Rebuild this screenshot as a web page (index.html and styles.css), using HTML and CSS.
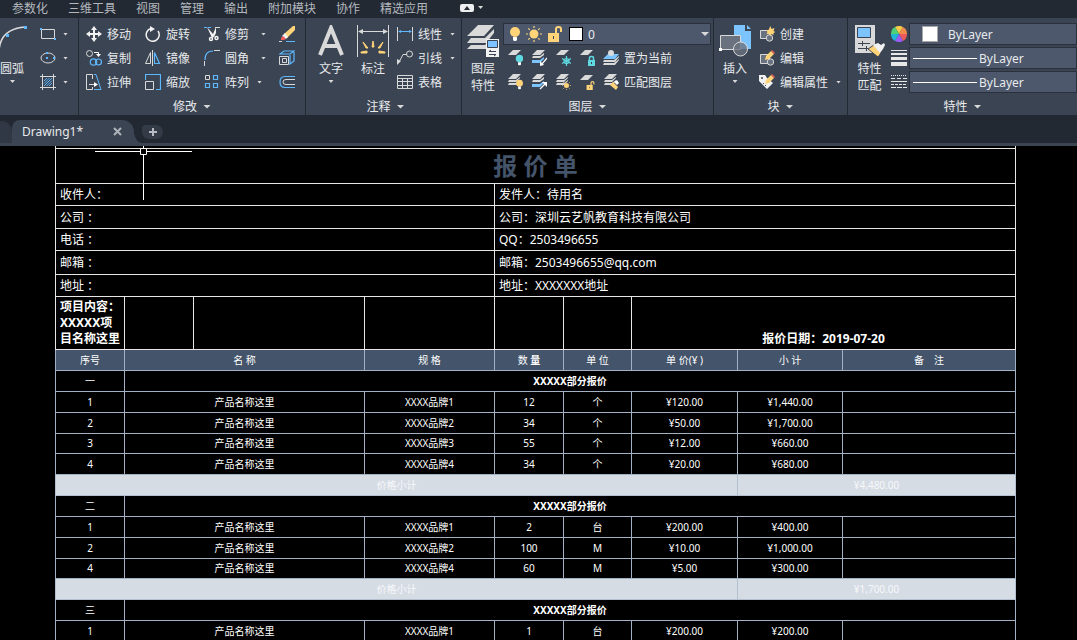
FILE: index.html
```html
<!DOCTYPE html>
<html lang="zh-CN">
<head>
    <meta charset="UTF-8">
    <meta name="viewport" content="width=device-width, initial-scale=1.0">
    <title>Drawing1*</title>
    <link rel="stylesheet" href="styles.css">
</head>
<body>

    <!-- Shared shapes -->
    <svg class="defs" aria-hidden="true">
        <symbol id="bulb" viewBox="0 0 12 16"><circle cx="6" cy="6" r="5"/><path fill="#fff" d="M4 11h4v3l-1 1H5l-1-1z"/></symbol>
        <symbol id="sun" viewBox="0 0 16 16"><circle cx="8" cy="8" r="4.5"/><path stroke="#ffd479" stroke-width="1.2" d="M8 0v2M8 14v2M0 8h2M14 8h2M2.3 2.3l1.5 1.5M12.2 12.2l1.5 1.5M2.3 13.7l1.5-1.5M12.2 3.8l1.5-1.5"/></symbol>
        <symbol id="unlock" viewBox="0 0 16 16"><path d="M1 7h11v9H1z"/><path fill="none" stroke="#ffd479" stroke-width="2" d="M9 7V3q0-2 2.500-2T14 3v3"/><path fill="#3b4453" d="M6 10h1v3H6z"/></symbol>
        <symbol id="layers" viewBox="0 0 16 16"><path fill="#d9d9d9" d="M6 0h8L9 5H1zM2 6h7l4-3v1L9 8H1zM2 9h7l4-3v1l-4 4H1z"/></symbol>
        <symbol id="layersblue" viewBox="0 0 16 16"><path fill="#d9d9d9" d="M6 0h8L9 5H1zM2 6h7l4-3v2L9 8H1z"/><path fill="#7cc4ff" d="M1 10h8l4-3v2l-4 4H1z"/></symbol>
        <symbol id="pencil" viewBox="0 0 10 10"><path fill="#ffd479" d="M1 6l5-5 3 3-5 5-4 1z"/><path fill="#f25c5c" d="M7 0l3 3-1 1-3-3z"/></symbol>
    </svg>

    <nav class="menubar">
        <a href="#">参数化</a>
        <a href="#">三维工具</a>
        <a href="#">视图</a>
        <a href="#">管理</a>
        <a href="#">输出</a>
        <a href="#">附加模块</a>
        <a href="#">协作</a>
        <a href="#">精选应用</a>
        <button class="minimize" aria-label="最小化">
            <svg width="14" height="8"><rect width="14" height="8" rx="2" fill="#eceef0"/><path fill="#222933" d="M4 6h6L7 2z"/></svg>
            <i class="caret"></i>
        </button>
    </nav>

    <div class="ribbon">
        <!-- Draw -->
        <section class="panel draw">
            <div class="tools">
                <button class="big arc">
                    <svg width="32" height="32" viewBox="0 0 32 32"><path fill="none" stroke="#d9d9d9" stroke-width="1.500" d="M3 28Q3 4 29 2"/><path fill="#5eb8ff" d="M1 26h3v3H1zM10 9h3v3h-3zM28 1h3v3h-3z"/></svg>
                    <span>圆弧</span>
                    <i class="caret"></i>
                </button>
                <div class="stack">
                    <button class="tool" aria-label="矩形"><svg width="16" height="16"><path fill="none" stroke="#d9d9d9" d="M1.500 3.500h13v9h-13z"/><path fill="#5eb8ff" d="M0 2h2v2H0zM14 12h2v2h-2z"/></svg><i class="caret"></i></button>
                    <button class="tool" aria-label="椭圆"><svg width="16" height="16"><ellipse cx="8" cy="8" rx="7" ry="5" fill="none" stroke="#d9d9d9"/><path fill="#5eb8ff" d="M6 2h2v2H6zM6 7h2v2H6zM13 7h2v2h-2z"/></svg><i class="caret"></i></button>
                    <button class="tool" aria-label="图案填充"><svg width="16" height="16"><path fill="none" stroke="#d9d9d9" d="M0 2.500h16M0 13.500h16M2.500 0v16M13.500 0v16"/><path stroke="#5eb8ff" d="M4 7l3-3M4 12l8-8M4 9.500L9.500 4M6.500 12L12 6.500M9 12l3-3"/></svg><i class="caret"></i></button>
                </div>
            </div>
        </section>

        <!-- Modify -->
        <section class="panel modify">
            <div class="tools">
                <button class="tool"><svg width="16" height="16"><path stroke="#f2f2f2" stroke-width="2" d="M8 2v12M2 8h12"/><path fill="#f2f2f2" d="M8 0l3 4H5zM8 16l3-4H5zM0 8l4-3v6zM16 8l-4-3v6z"/></svg>移动</button>
                <button class="tool"><svg width="16" height="16"><path fill="none" stroke="#f2f2f2" stroke-width="1.500" d="M6 2.500A6.500 6.500 0 1 0 13 5"/><path fill="#f2f2f2" d="M5 0l5 3-5 3z"/></svg>旋转</button>
                <button class="tool"><svg width="16" height="16"><path stroke="#5eb8ff" stroke-dasharray="3 1" d="M0 1.500h8"/><path stroke="#d9d9d9" d="M11 1.500h5"/><path fill="#f2f2f2" d="M3 1l6 7 3-7v6l-2 4-2 1z"/><circle cx="7" cy="13" r="1.500" fill="none" stroke="#f2f2f2" stroke-width="1.500"/><circle cx="12.500" cy="12" r="1.500" fill="none" stroke="#f2f2f2" stroke-width="1.500"/></svg>修剪<i class="caret"></i></button>
                <button class="tool" aria-label="删除"><svg width="16" height="16"><path fill="#ffd479" d="M14 0h2v4l-8 8-3-4z"/><path fill="#f2f2f2" d="M6 7l3 4-2 2-4-3z"/><path fill="#f25c5c" d="M4 10l3 3-2 1H2v-2z"/><path stroke="#d9d9d9" d="M0 15.500h3"/><path stroke="#5eb8ff" d="M7 15.500h9"/></svg></button>

                <button class="tool"><svg width="16" height="16"><circle cx="3.500" cy="3.500" r="3" fill="none" stroke="#d9d9d9"/><path fill="none" stroke="#fff" d="M8 2.500h4.500V6"/><path fill="#fff" d="M10 4h5l-2.500 3z"/><circle cx="7.500" cy="12" r="3.200" fill="none" stroke="#5eb8ff" stroke-width="1.200"/><circle cx="12.500" cy="12" r="3" fill="none" stroke="#5eb8ff" stroke-width="1.200"/></svg>复制</button>
                <button class="tool"><svg width="16" height="16"><path fill="none" stroke="#d9d9d9" d="M5.500 2.500v11h-5z"/><path fill="none" stroke="#5eb8ff" stroke-width="1.200" d="M9.500 2.500v11h5z"/><path stroke="#d9d9d9" d="M7.500 0v16"/></svg>镜像</button>
                <button class="tool"><svg width="16" height="16"><path stroke="#d9d9d9" d="M10 .5h6M.5 11v5"/><path fill="none" stroke="#5eb8ff" stroke-width="1.200" d="M1 10Q1 1 9 1"/></svg>圆角<i class="caret"></i></button>
                <button class="tool" aria-label="分解"><svg width="16" height="16"><path fill="none" stroke="#d9d9d9" d="M.5 6.500h9v8h-9zM3.500 8.500h4v4h-4z"/><path fill="none" stroke="#5eb8ff" stroke-width="1.200" d="M1 4l4-3h10l-4 3zM15 2v9l-4 3V5"/></svg></button>

                <button class="tool"><svg width="16" height="16"><path fill="none" stroke="#d9d9d9" d="M6.500 5V.5h-6v15h6V13M3 10.500h7"/><path fill="#fff" d="M8 8l4 2.500L8 13z"/><path fill="none" stroke="#5eb8ff" d="M8 .5h2l5 15H8"/></svg>拉伸</button>
                <button class="tool"><svg width="16" height="16"><path fill="none" stroke="#5eb8ff" stroke-width="1.200" d="M.5 6V.5h15v15H11"/><path fill="none" stroke="#d9d9d9" d="M.5 7.500h8v8h-8z"/></svg>缩放</button>
                <button class="tool near"><svg width="16" height="16"><path fill="none" stroke="#d9d9d9" d="M1.500 1.500h4v4h-4z"/><path fill="none" stroke="#5eb8ff" stroke-width="1.200" d="M9.500 1.500h4v4h-4zM1.500 9.500h4v4h-4zM9.500 9.500h4v4h-4z"/></svg>阵列<i class="caret"></i></button>
                <button class="tool" aria-label="偏移"><svg width="16" height="16"><path fill="none" stroke="#5eb8ff" stroke-width="1.200" d="M16 2.500H6Q1 2.500 1 8t5 5.500h10"/><path fill="none" stroke="#d9d9d9" d="M16 5.500H7Q4 5.500 4 8t3 2.500h9"/></svg></button>
            </div>
            <button class="title">修改<i class="caret wide"></i></button>
        </section>

        <!-- Annotate -->
        <section class="panel annotate">
            <div class="tools">
                <button class="big">
                    <svg width="32" height="32"><path fill="none" stroke="#d9d9d9" stroke-width="4" d="M5 30L16 3l11 27M9 21h14"/></svg>
                    <span>文字</span>
                    <i class="caret"></i>
                </button>
                <button class="big">
                    <svg width="32" height="32"><path stroke="#d9d9d9" d="M.5 0v32M31.500 0v32M2 6.500h28"/><path fill="#d9d9d9" d="M1 6.500L6 4v5zM31 6.500L26 4v5z"/><path fill="#ffd479" d="M15 22l1-6 1 6zM11 23l-5-6 3 6zM21 23l5-6-3 6zM10 26l-6 1v1h6zM22 26l6 1v1h-6z" stroke="#ffd479"/></svg>
                    <span>标注</span>
                </button>
                <div class="stack">
                    <button class="tool near"><svg width="16" height="16"><path stroke="#d9d9d9" d="M.5 1v14M15.500 1v14"/><path stroke="#5eb8ff" d="M2 5.500h12"/><path fill="#5eb8ff" d="M1 5.500L4 4v3zM15 5.500L12 4v3z"/></svg>线性<i class="caret"></i></button>
                    <button class="tool near"><svg width="16" height="16"><circle cx="12.500" cy="4" r="3" fill="none" stroke="#d9d9d9"/><path fill="none" stroke="#d9d9d9" d="M10 4.500H6L2 12"/><path fill="#d9d9d9" d="M0 15V9l4 2z"/></svg>引线<i class="caret"></i></button>
                    <button class="tool"><svg width="16" height="16"><path fill="none" stroke="#d9d9d9" d="M.5 1.500h15v13H.5zM0 4.500h16M0 7.500h16M0 11.500h16M5.500 4v10M10.500 4v10"/></svg>表格</button>
                </div>
            </div>
            <button class="title">注释<i class="caret wide"></i></button>
        </section>

        <!-- Layers -->
        <section class="panel layer">
            <div class="tools">
                <button class="big">
                    <svg width="32" height="32"><path fill="#d9d9d9" d="M11 0h16L17 11H0zM4 13h14L27 4v4l-8 10H0zM4 20h14l2-2v6H0z"/><path fill="#f2f2f2" d="M19 14h13v18H19z"/><path fill="#7cc4ff" stroke="#3b4453" d="M20.500 15.500h10v7h-10z"/><path fill="none" stroke="#3b4453" d="M22 26.500h7M22 29.500h7M24 25l-2 1.500M27 31l2-1.500"/></svg>
                    <span>图层<br>特性</span>
                </button>
                <div class="stack">
                    <div class="combo layer-combo">
                        <svg width="12" height="16" fill="#ffd479"><use href="#bulb"/></svg>
                        <svg width="16" height="16" fill="#ffd479"><use href="#sun"/></svg>
                        <svg width="16" height="16" fill="#ffd479"><use href="#unlock"/></svg>
                        <i class="swatch black"></i>
                        <select aria-label="图层"><option>0</option></select>
                        <i class="caret wide"></i>
                    </div>
                    <div class="icons">
                        <button class="tool" aria-label="关"><svg width="16" height="16"><path fill="#d9d9d9" d="M6 0h8L9 5H1z"/><use href="#bulb" x="8" y="4" width="9" height="12" fill="#5fd9e0"/></svg></button>
                        <button class="tool" aria-label="隔离"><svg width="16" height="16"><use href="#layersblue"/><path stroke="#fff" stroke-width="1.200" d="M16 8l-5 6"/><path fill="#fff" d="M9 16v-5l4 4z"/></svg></button>
                        <button class="tool" aria-label="冻结"><svg width="16" height="16"><path fill="#d9d9d9" d="M6 0h8L9 5H1z"/><g fill="none" stroke="#5fd9e0" stroke-width="1.200"><circle cx="11.500" cy="11" r="2.500"/><path d="M11.500 6v10M7 8.500l9 5M7 13.500l9-5"/></g></svg></button>
                        <button class="tool" aria-label="锁定"><svg width="16" height="16"><path fill="#d9d9d9" d="M6 0h8L9 5H1z"/><path fill="#5fd9e0" d="M9 10h7v6H9z"/><path fill="none" stroke="#5fd9e0" stroke-width="1.500" d="M10.500 10V8q0-1.500 2-1.500t2 1.500v2"/><path stroke="#3b4453" d="M12.500 12v2"/></svg></button>
                        <button class="tool"><svg width="16" height="16"><path fill="#7cc4ff" d="M5 4h11l-4 5H0z"/><path fill="#d9d9d9" d="M1 10h10l5-4v1l-4 5H0zM1 13h10l5-4v1l-4 5H0z"/><circle cx="8" cy="3" r="3" fill="#d9d9d9"/></svg>置为当前</button>
                    </div>
                    <div class="icons">
                        <button class="tool" aria-label="打开所有图层"><svg width="16" height="16"><use href="#layers"/><use href="#bulb" x="8" y="5" width="9" height="11" fill="#ffd479"/></svg></button>
                        <button class="tool" aria-label="取消隔离"><svg width="16" height="16"><use href="#layersblue"/><path stroke="#fff" stroke-width="1.200" d="M9 15l5-5"/><path fill="#fff" d="M16 8v5l-5-5z"/></svg></button>
                        <button class="tool" aria-label="解冻"><svg width="16" height="16"><use href="#layers"/><use href="#sun" x="7" y="7" width="9" height="9" fill="#ffd479"/></svg></button>
                        <button class="tool" aria-label="解锁"><svg width="16" height="16"><path fill="#d9d9d9" d="M6 1h8L9 6H1z"/><use href="#unlock" x="7" y="7" width="9" height="9" fill="#ffd479"/></svg></button>
                        <button class="tool"><svg width="16" height="16"><use href="#layers"/><path fill="#ffd479" d="M7 11l3-3 5 5-2 3z"/><path fill="#fff" d="M11 8l3-2 2 3-2 2z"/></svg>匹配图层</button>
                    </div>
                </div>
            </div>
            <button class="title">图层<i class="caret wide"></i></button>
        </section>

        <!-- Block -->
        <section class="panel block">
            <div class="tools">
                <button class="big">
                    <svg width="32" height="32"><path fill="#7cc4ff" d="M15 0h11v6h6v18H15z"/><path fill="#7cc4ff" d="M28 0l4 4h-4z"/><path fill="#6a7280" stroke="#d9d9d9" d="M1.500 10.500h20v14h-20z"/><circle cx="21.500" cy="24" r="7" fill="#6a7280" fill-opacity=".8" stroke="#d9d9d9"/><path fill="#fff" d="M0 23h3v3H0z"/></svg>
                    <span>插入</span>
                    <i class="caret"></i>
                </button>
                <div class="stack">
                    <button class="tool"><svg width="16" height="16"><path fill="#6a7280" stroke="#d9d9d9" d="M1.500 4.500h9v8h-9z"/><circle cx="10.500" cy="12" r="3.200" fill="#6a7280" stroke="#d9d9d9"/><path fill="#ffd479" d="M11.500 0l1 3 3-1-1 3 2 1-2 1 0 2-2-1-1 2-1-2-3 0 1-2-1-2 2 0z"/></svg>创建</button>
                    <button class="tool"><svg width="16" height="16"><path fill="#6a7280" stroke="#d9d9d9" d="M1.500 4.500h9v9h-9z"/><circle cx="11.500" cy="12" r="3.200" fill="#6a7280" stroke="#d9d9d9"/><use href="#pencil" x="6" width="10" height="10"/></svg>编辑</button>
                    <button class="tool near"><svg width="16" height="16"><path fill="#f2f2f2" d="M0 1h6l2 3 6 5-6 6-8-8z"/><circle cx="3" cy="4" r="1" fill="#3b4453"/><path stroke="#3b4453" d="M4 9l1 1M6 11l1 1"/><use href="#pencil" x="6" width="10" height="10"/></svg>编辑属性<i class="caret"></i></button>
                </div>
            </div>
            <button class="title">块<i class="caret wide"></i></button>
        </section>

        <!-- Properties -->
        <section class="panel props">
            <div class="tools">
                <button class="big">
                    <svg width="32" height="32"><path fill="#d9d9d9" d="M1 0h20v28H1z"/><path fill="#7cc4ff" stroke="#3b4453" d="M3.500 2.500h13v10h-13z"/><path stroke="#3b4453" d="M4 18.500h12M4 23.500h10M8.500 16v5M12.500 21v5"/><path fill="#ffd479" stroke="#3b4453" d="M14 24l6-4 7 8-3 4z"/><path fill="#f2f2f2" d="M19 20l5-2 3 2 3-2 1 2-2 4-3 4z"/></svg>
                    <span>特性<br>匹配</span>
                </button>
                <div class="stack">
                    <div class="prop-row">
                        <svg width="16" height="16"><path fill="#f7c948" d="M8 8L4 1a8 8 0 0 1 8 0z"/><path fill="#f28b4b" d="M8 8l4-7a8 8 0 0 1 4 7z"/><path fill="#ee5a5a" d="M8 8h8a8 8 0 0 1-4 7z"/><path fill="#9a5cf5" d="M8 8l4 7a8 8 0 0 1-8 0z"/><path fill="#21b5d8" d="M8 8l-4 7a8 8 0 0 1-4-7z"/><path fill="#4fd07b" d="M8 8H0a8 8 0 0 1 4-7z"/></svg>
                        <div class="combo">
                            <i class="swatch"></i>
                            <select aria-label="对象颜色"><option>ByLayer</option></select>
                        </div>
                    </div>
                    <div class="prop-row">
                        <svg width="16" height="16" fill="#e6e6e6"><path d="M0 0h16v1H0zM0 3h16v2H0zM0 7h16v3H0zM0 12h16v4H0z"/></svg>
                        <div class="combo line-combo">
                            <i class="line"></i>
                            <select aria-label="线宽"><option>ByLayer</option></select>
                        </div>
                    </div>
                    <div class="prop-row">
                        <svg width="16" height="16" stroke="#e6e6e6"><path stroke-dasharray="1 1" d="M0 1.500h16"/><path stroke-dasharray="4 2" d="M0 4.500h16"/><path d="M0 7.500h16"/><path stroke-dasharray="3 1" d="M0 10.500h16"/><path stroke-dasharray="5 1" d="M0 13.500h16"/></svg>
                        <div class="combo line-combo">
                            <i class="line"></i>
                            <select aria-label="线型"><option>ByLayer</option></select>
                        </div>
                    </div>
                </div>
            </div>
            <button class="title">特性<i class="caret wide"></i></button>
        </section>
    </div>

    <div class="tabs">
        <div class="tab-prev"></div>
        <div class="tab">
            <span>Drawing1*</span>
            <button aria-label="关闭"><svg width="9" height="9"><path stroke="#aeb3ba" stroke-width="2" d="M1 1l7 7M8 1L1 8"/></svg></button>
        </div>
        <button class="tab-new" aria-label="新图形"><svg width="8" height="8"><path stroke="#b8bcc2" stroke-width="2" d="M4 0v8M0 4h8"/></svg></button>
    </div>

    <main class="canvas">
        <table class="quote">
            <colgroup>
                <col class="c-no"><col class="c-no"><col class="c-name"><col class="c-spec"><col class="c-no"><col class="c-unit"><col class="c-price"><col class="c-total"><col>
            </colgroup>
            <tbody class="info">
                <tr class="edge"><td colspan="9"></td></tr>
                <tr class="heading"><th colspan="9">报 价 单</th></tr>
                <tr><td colspan="4">收件人：</td><td colspan="5">发件人：待用名</td></tr>
                <tr class="tall"><td colspan="4">公司 ：</td><td colspan="5">公司：深圳云艺帆教育科技有限公司</td></tr>
                <tr><td colspan="4">电话 ：</td><td colspan="5">QQ：2503496655</td></tr>
                <tr class="taller"><td colspan="4">邮箱 ：</td><td colspan="5">邮箱：2503496655@qq.com</td></tr>
                <tr><td colspan="4">地址 ：</td><td colspan="5">地址：XXXXXXX地址</td></tr>
                <tr class="project">
                    <th>项目内容：<br>XXXXX项<br>目名称这里</th><td></td><td></td><td></td><td></td><td></td>
                    <th colspan="3" class="date">报价日期：2019-07-20</th>
                </tr>
            </tbody>
            <tbody class="items">
                <tr class="cols"><th>序号</th><th colspan="2">名 称</th><th>规 格</th><th>数 <b>量</b></th><th>单 位</th><th>单 价(¥ )</th><th>小 计</th><th>备&emsp;注</th></tr>

                <tr><td>一</td><th colspan="8">XXXXX部分报价</th></tr>
                <tr><td>1</td><td colspan="2">产品名称这里</td><td>XXXX品牌1</td><td>12</td><td>个</td><td>¥120.00</td><td>¥1,440.00</td><td></td></tr>
                <tr><td>2</td><td colspan="2">产品名称这里</td><td>XXXX品牌2</td><td>34</td><td>个</td><td>¥50.00</td><td>¥1,700.00</td><td></td></tr>
                <tr class="short"><td>3</td><td colspan="2">产品名称这里</td><td>XXXX品牌3</td><td>55</td><td>个</td><td>¥12.00</td><td>¥660.00</td><td></td></tr>
                <tr><td>4</td><td colspan="2">产品名称这里</td><td>XXXX品牌4</td><td>34</td><td>个</td><td>¥20.00</td><td>¥680.00</td><td></td></tr>
                <tr class="subtotal"><td colspan="7">价格小计</td><td colspan="2">¥4,480.00</td></tr>

                <tr><td>二</td><th colspan="8">XXXXX部分报价</th></tr>
                <tr><td>1</td><td colspan="2">产品名称这里</td><td>XXXX品牌1</td><td>2</td><td>台</td><td>¥200.00</td><td>¥400.00</td><td></td></tr>
                <tr><td>2</td><td colspan="2">产品名称这里</td><td>XXXX品牌2</td><td>100</td><td>M</td><td>¥10.00</td><td>¥1,000.00</td><td></td></tr>
                <tr class="short"><td>4</td><td colspan="2">产品名称这里</td><td>XXXX品牌4</td><td>60</td><td>M</td><td>¥5.00</td><td>¥300.00</td><td></td></tr>
                <tr class="subtotal"><td colspan="7">价格小计</td><td colspan="2">¥1,700.00</td></tr>

                <tr><td>三</td><th colspan="8">XXXXX部分报价</th></tr>
                <tr><td>1</td><td colspan="2">产品名称这里</td><td>XXXX品牌1</td><td>1</td><td>台</td><td>¥200.00</td><td>¥200.00</td><td></td></tr>
            </tbody>
        </table>
        <!-- Crosshair cursor -->
        <svg class="crosshair" width="97" height="54" fill="none" stroke="#fff"><path d="M0 5.500h45M52 5.500h45M48.500 0v2M48.500 9v45M45.500 2.500h6v6h-6z"/></svg>
    </main>

</body>
</html>
```

FILE: styles.css
```css
* {
    box-sizing: border-box;
}
html, body {
    height: 100%;
}
body {
    margin: 0;
    display: flex;
    flex-direction: column;
    overflow: hidden;
    background-color: #000;
    color: #e8eaec;
    font-family: "Noto Sans", "Noto Sans CJK SC", sans-serif;
    font-size: 12px;
    line-height: 17px;
}
button, select {
    font: inherit;
    color: inherit;
    background: none;
    border: none;
    padding: 0;
    margin: 0;
    cursor: pointer;
}
svg {
    flex: none;
    display: block;
}
.defs {
    position: absolute;
    width: 0;
    height: 0;
}
.caret {
    flex: none;
    width: 5px;
    height: 3px;
    background-color: #d9d9d9;
    clip-path: polygon(0 0, 100% 0, 50% 100%);
}
.caret.wide {
    width: 8px;
    height: 4px;
}

/* Menu bar */
.menubar {
    flex: none;
    display: flex;
    gap: 20px;
    height: 18px;
    padding-left: 12px;
    background-color: #222933;
    white-space: nowrap;
}
.menubar a {
    color: #b4b8be;
    text-decoration: none;
}
.minimize {
    display: flex;
    align-items: center;
    gap: 4px;
    margin-left: 12px;
    height: 15px;
}

/* Ribbon */
.ribbon {
    flex: none;
    display: flex;
    height: 97px;
    background-color: #3b4453;
    white-space: nowrap;
}
.panel {
    flex: none;
    display: flex;
    flex-direction: column;
    padding-top: 4px;
    border-right: 1px solid #222933;
}
.tools {
    display: flex;
    height: 72px;
}
.draw { width: 79px; }
.modify { width: 227px; }
.annotate { width: 156px; padding-left: 4px; }
.layer { width: 252px; }
.block { width: 134px; }
.props { flex: 1; min-width: 0; border-right: none; }

.modify .tools {
    display: grid;
    grid-template-columns: 59px 59px 75px 16px;
    grid-template-rows: repeat(3, 24px);
    padding-left: 7px;
}
.stack {
    display: grid;
    grid-template-rows: repeat(3, 24px);
    flex: 1;
    min-width: 0;
}
.tool {
    display: flex;
    align-items: center;
    gap: 5px;
    height: 24px;
}
.tool .caret {
    margin-left: 7px;
}
.tool.near .caret {
    margin-left: 3px;
}
.draw .tool .caret {
    margin-left: 2px;
}
.big {
    flex: none;
    display: flex;
    flex-direction: column;
    align-items: center;
    width: 42px;
    padding-top: 3px;
}
.big span {
    margin-top: 3px;
}
.big .caret {
    margin-top: 3px;
}
.arc {
    width: 40px;
    align-items: flex-start;
}
.arc svg {
    margin-left: -4px;
}
.arc .caret {
    margin-left: 10px;
}
.annotate .stack {
    padding-left: 3px;
}
.block .stack {
    padding-left: 3px;
}
.title {
    display: flex;
    align-items: center;
    justify-content: center;
    gap: 6px;
    height: 21px;
    padding-top: 4px;
}

/* Drop-downs */
.combo {
    flex: 1;
    min-width: 0;
    display: flex;
    align-items: center;
    height: 22px;
    background-color: #4d586c;
    border: 1px solid #2a313d;
}
.combo select {
    flex: 1;
    min-width: 0;
    appearance: none;
    outline: none;
}
.layer-combo {
    gap: 5px;
    margin: 1px 2px 1px -1px;
    padding: 0 1px 0 5px;
}
.swatch {
    flex: none;
    width: 16px;
    height: 16px;
    margin: 0 10px 0 12px;
    background-color: #fff;
    border: 1px solid #a9a9a9;
}
.swatch.black {
    width: 14px;
    height: 14px;
    margin: 0 0 0 1px;
    border-color: #000;
}
.icons {
    display: flex;
    gap: 8px;
    padding-left: 3px;
}
.props .big {
    width: 43px;
}
.prop-row {
    display: flex;
    align-items: center;
    gap: 2px;
}
.line-combo {
    gap: 2px;
    padding-left: 3px;
}
.line {
    flex: none;
    width: 64px;
    height: 1px;
    background-color: #fff;
}

/* Drawing tabs */
.tabs {
    flex: none;
    display: flex;
    align-items: flex-end;
    height: 31px;
    background-color: #222933;
    border-bottom: 3px solid #3b4453;
}
.tab-prev {
    width: 12px;
    height: 22px;
    background-color: #303846;
    border-radius: 0 10px 0 0;
}
.tab {
    position: relative;
    display: flex;
    align-items: center;
    justify-content: space-between;
    width: 122px;
    height: 23px;
    padding: 0 12px 0 10px;
    background-color: #3b4453;
    border-radius: 8px 12px 0 0;
}
/* foot of the tab curving into the strip below */
.tab::after {
    content: "";
    position: absolute;
    left: 100%;
    bottom: 0;
    width: 8px;
    height: 12px;
    background: radial-gradient(ellipse 8px 12px at 100% 0, transparent 98%, #3b4453 100%);
}
.tab-new {
    display: flex;
    align-items: center;
    justify-content: center;
    width: 21px;
    height: 14px;
    margin: 0 0 4px 8px;
    background-color: #333b47;
    border-radius: 4px 8px 8px 8px;
}

/* Drawing area */
.canvas {
    flex: 1;
    position: relative;
    overflow: hidden;
    min-height: 0;
    padding: 0 61px 0 55px;
    background-color: #000;
}
.crosshair {
    position: absolute;
    left: 95px;
    top: 0;
}
.quote {
    width: 100%;
    table-layout: fixed;
    border-collapse: collapse;
    color: #fff;
}
.c-no { width: 69px; }
.c-name { width: 171px; }
.c-spec { width: 130px; }
.c-unit { width: 68px; }
.c-price { width: 106px; }
.c-total { width: 105px; }

.quote th, .quote td {
    padding: 0;
    border: 1px solid #e6e6e6;
}
.info tr { height: 22px; }
.info .tall { height: 23px; }
.info .taller { height: 24px; }
.info td {
    padding: 1px 0 0 4px;
}
.info .edge { height: 2px; }
.quote .edge td {
    padding: 0;
    border-top: none;
}
.info .heading {
    height: 35px;
}
.heading th {
    color: #44546a;
    font-size: 24px;
    line-height: 30px;
}
.info .project {
    height: 53px;
}
.project th {
    padding-left: 4px;
    text-align: left;
    line-height: 16px;
}
.project .date {
    padding: 0 0 2px;
    text-align: center;
    vertical-align: bottom;
}

.items {
    font-size: 10px;
    line-height: 14px;
    text-align: center;
}
.items tr { height: 21px; }
.items .short { height: 20px; }
.items th, .items td {
    border-color: #a3b1c4;
}
.cols {
    background-color: #44546a;
}
.cols th {
    font-weight: normal;
}
.subtotal {
    background-color: #d6dce4;
    color: #f6f8fa;
}
.items .subtotal td {
    border-color: #b4bfd0;
}
```
